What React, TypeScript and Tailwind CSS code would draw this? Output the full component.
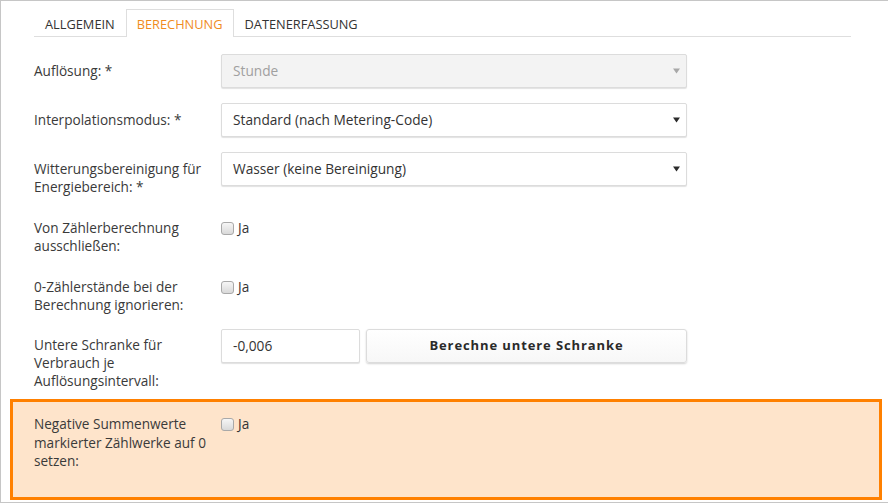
import React from "react";

const font = { fontFamily: "'Open Sans', 'Noto Sans', sans-serif" };

function Caret({ muted }: { muted?: boolean }) {
  return (
    <svg width="7" height="6" viewBox="0 0 7 6" className="shrink-0">
      <path d="M0 0.5 H7 L3.5 5.5 Z" fill={muted ? "#a8a8a8" : "#2b2b2b"} />
    </svg>
  );
}

function Select({ value, disabled }: { value: string; disabled?: boolean }) {
  return (
    <div
      className={`flex h-[34px] w-[466px] items-center justify-between rounded-[2px] border border-[#dcdcdc] pl-[11px] pr-[6px] text-[13.7px] shadow-[0_1px_1px_rgba(0,0,0,0.12)] ${
        disabled ? "bg-[#f3f3f3] text-[#a0a0a0]" : "bg-white text-[#333]"
      }`}
    >
      <span>{value}</span>
      <Caret muted={disabled} />
    </div>
  );
}

function Checkbox() {
  return (
    <span className="inline-block h-[13px] w-[13px] rounded-[3px] border border-[#a9a9a9] bg-gradient-to-b from-[#f6f6f6] to-[#d9d9d9]" />
  );
}

function CheckField() {
  return (
    <div className="flex items-center gap-[4px] self-start pt-[8px] text-[13.6px] leading-[18px] text-[#333]">
      <Checkbox />
      <span>Ja</span>
    </div>
  );
}

function Label({ children, pt = "pt-[8px]", lh = "leading-[18px]" }: { children: React.ReactNode; pt?: string; lh?: string }) {
  return <div className={`w-[187px] shrink-0 ${pt} ${lh} text-[13.6px] text-[#3a3a3a]`}>{children}</div>;
}

export default function App() {
  const tabs = ["ALLGEMEIN", "BERECHNUNG", "DATENERFASSUNG"];

  return (
    <div className="h-[504px] w-[888px] overflow-hidden bg-white" style={font}>
      <div className="h-[503px] w-[888px] border-l border-t border-b border-[#c6c6c6]">
        {/* tabs */}
        <div className="ml-[33px] mt-[8px] flex w-[817px] border-b border-[#dedede]">
          {tabs.map((tab) => (
            <div
              key={tab}
              className={`-mb-px h-[28px] px-[10px] pt-[6px] text-[12.8px] leading-[16px] ${
                tab === "BERECHNUNG"
                  ? "border border-b-0 border-[#dedede] bg-white text-[#f08c1e]"
                  : "border border-transparent text-[#333]"
              }`}
            >
              {tab}
            </div>
          ))}
        </div>

        <div className="pl-[33px]">
          <div className="mt-[17px] flex">
            <Label>Auflösung: *</Label>
            <Select value="Stunde" disabled />
          </div>

          <div className="mt-[15px] flex">
            <Label>Interpolationsmodus: *</Label>
            <Select value="Standard (nach Metering-Code)" />
          </div>

          <div className="mt-[15px] flex">
            <Label>
              Witterungsbereinigung für
              <br />
              Energiebereich: *
            </Label>
            <Select value="Wasser (keine Bereinigung)" />
          </div>

          <div className="mt-[15px] flex">
            <Label>
              Von Zählerberechnung
              <br />
              ausschließen:
            </Label>
            <CheckField />
          </div>

          <div className="mt-[15px] flex">
            <Label>
              0-Zählerstände bei der
              <br />
              Berechnung ignorieren:
            </Label>
            <CheckField />
          </div>

          <div className="mt-[15px] flex">
            <Label pt="pt-[7px]">
              Untere Schranke für
              <br />
              Verbrauch je
              <br />
              Auflösungsintervall:
            </Label>
            <div className="flex gap-[6px] self-start">
              <div className="flex h-[34px] w-[139px] items-center rounded-[2px] border border-[#dcdcdc] bg-white pl-[11px] text-[13.7px] text-[#333] shadow-[0_1px_1px_rgba(0,0,0,0.12)]">
                -0,006
              </div>
              <button className="h-[34px] w-[321px] rounded-[3px] border border-[#dcdcdc] bg-gradient-to-b from-white to-[#f7f7f7] text-[13px] font-bold tracking-[0.9px] text-[#2a2a2a] shadow-[0_1px_2px_rgba(0,0,0,0.18)]">
                Berechne untere Schranke
              </button>
            </div>
          </div>
        </div>

        <div className="ml-[9px] mt-[9px] flex h-[101px] w-[872px] border-[3px] border-[#ff8000] bg-[#fee4cb] pl-[21px] pt-[5px]">
          <Label lh="leading-[18.5px]">
            Negative Summenwerte
            <br />
            markierter Zählwerke auf 0
            <br />
            setzen:
          </Label>
          <CheckField />
        </div>
      </div>
    </div>
  );
}
